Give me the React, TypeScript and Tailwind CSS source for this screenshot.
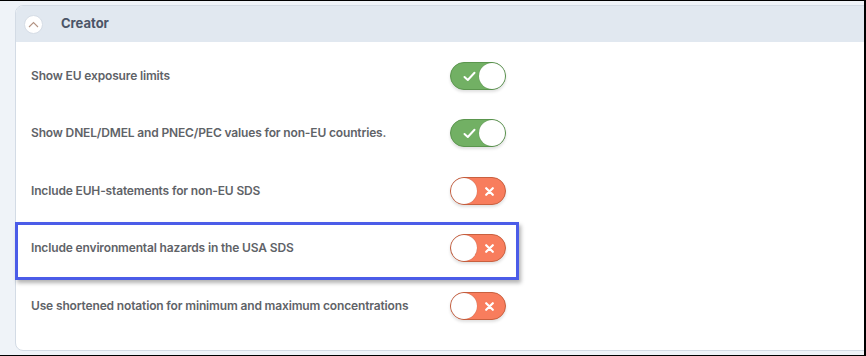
import React from "react";

const rows: { label: string; on: boolean }[] = [
  { label: "Show EU exposure limits", on: true },
  { label: "Show DNEL/DMEL and PNEC/PEC values for non-EU countries.", on: true },
  { label: "Include EUH-statements for non-EU SDS", on: false },
  { label: "Include environmental hazards in the USA SDS", on: false },
  { label: "Use shortened notation for minimum and maximum concentrations", on: false },
];

function Toggle({ on }: { on: boolean }) {
  if (on) {
    return (
      <div className="relative w-[56px] h-[28px] rounded-full bg-[#72b064] border border-[#5b964e] shadow-[0_2px_3px_rgba(0,0,0,0.12)]">
        <svg className="absolute left-[12px] top-[8px]" width="13" height="11" viewBox="0 0 13 11">
          <path d="M1.5 6 L4.8 9 L11.5 1.8" fill="none" stroke="#ffffff" strokeWidth="2" strokeLinecap="round" strokeLinejoin="round" />
        </svg>
        <div className="absolute right-[0px] top-[0px] w-[26px] h-[26px] rounded-full bg-white shadow-[0_0_1px_rgba(0,0,0,0.3)]" />
      </div>
    );
  }
  return (
    <div className="relative w-[56px] h-[28px] rounded-full bg-[#f87d5d] border border-[#c9603f] shadow-[0_2px_3px_rgba(0,0,0,0.12)]">
      <div className="absolute left-[0px] top-[0px] w-[26px] h-[26px] rounded-full bg-white shadow-[0_0_1px_rgba(0,0,0,0.3)]" />
      <svg className="absolute left-[34px] top-[9px]" width="9" height="9" viewBox="0 0 9 9">
        <path d="M1.2 1.2 L7.8 7.8 M7.8 1.2 L1.2 7.8" fill="none" stroke="#ffffff" strokeWidth="2.2" strokeLinecap="round" />
      </svg>
    </div>
  );
}

export default function App() {
  return (
    <div
      className="relative w-[866px] h-[356px] overflow-hidden bg-[#eff3f8] border-t border-b border-r-2 border-black pl-[15px] pt-[4px]"
      style={{ fontFamily: "Inter, 'Noto Sans', sans-serif" }}
    >
      <div className="w-[870px] h-[346px] bg-white border border-[#d3dbe5] rounded-[8px] overflow-hidden">
        <div className="h-[36px] bg-[#e1e8f0] flex items-center pl-[8px]">
          <div className="w-[19px] h-[19px] rounded-full bg-white border border-[#d6dde6] flex items-center justify-center">
            <svg width="11" height="7" viewBox="0 0 11 7">
              <path d="M1 6 L5.5 1.5 L10 6" fill="none" stroke="#b49585" strokeWidth="1.1" />
            </svg>
          </div>
          <span className="ml-[18px] text-[13px] font-bold text-[#4b5567]">Creator</span>
        </div>
        <div className="pt-[5px]">
          {rows.map((r) => (
            <div key={r.label} className="h-[57.5px] flex items-center pl-[15px]">
              <span className="w-[419px] text-[12px] font-semibold tracking-[-0.15px] text-[#5f6368]">{r.label}</span>
              <Toggle on={r.on} />
            </div>
          ))}
        </div>
      </div>
      <div className="absolute left-[15px] top-[221px] w-[504px] h-[58px] border-[3px] border-[#4b5ce8] shadow-[2px_3px_4px_rgba(0,0,0,0.3)]" />
    </div>
  );
}
